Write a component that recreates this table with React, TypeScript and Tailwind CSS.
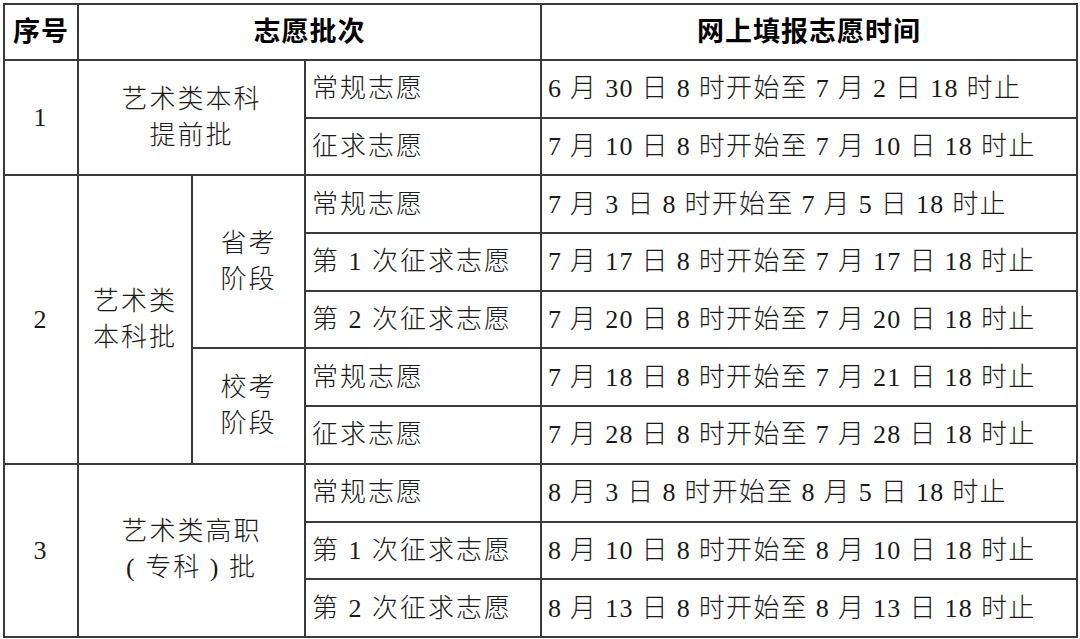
import React from 'react';

type Row = { kind: string; time: string };

const td = 'border-2 border-[#3a3a3a] p-0 overflow-hidden';
const cellText = 'pl-[6px] text-left whitespace-nowrap';

const rows: Row[] = [
    { kind: '常规志愿', time: '6 月 30 日 8 时开始至 7 月 2 日 18 时止' },
    { kind: '征求志愿', time: '7 月 10 日 8 时开始至 7 月 10 日 18 时止' },
    { kind: '常规志愿', time: '7 月 3 日 8 时开始至 7 月 5 日 18 时止' },
    { kind: '第 1 次征求志愿', time: '7 月 17 日 8 时开始至 7 月 17 日 18 时止' },
    { kind: '第 2 次征求志愿', time: '7 月 20 日 8 时开始至 7 月 20 日 18 时止' },
    { kind: '常规志愿', time: '7 月 18 日 8 时开始至 7 月 21 日 18 时止' },
    { kind: '征求志愿', time: '7 月 28 日 8 时开始至 7 月 28 日 18 时止' },
    { kind: '常规志愿', time: '8 月 3 日 8 时开始至 8 月 5 日 18 时止' },
    { kind: '第 1 次征求志愿', time: '8 月 10 日 8 时开始至 8 月 10 日 18 时止' },
    { kind: '第 2 次征求志愿', time: '8 月 13 日 8 时开始至 8 月 13 日 18 时止' },
];

// cells that start on a given row (seq number, batch, stage)
const lead = (i: number) => {
    switch (i) {
        case 0:
            return (
                <>
                    <td rowSpan={2} className={`${td} text-center`}>1</td>
                    <td rowSpan={2} colSpan={2} className={`${td} text-center leading-[36px]`}>
                        艺术类本科<br />提前批
                    </td>
                </>
            );
        case 2:
            return (
                <>
                    <td rowSpan={5} className={`${td} text-center`}>2</td>
                    <td rowSpan={5} className={`${td} text-center leading-[36px]`}>
                        艺术类<br />本科批
                    </td>
                    <td rowSpan={3} className={`${td} text-center leading-[36px]`}>
                        省考<br />阶段
                    </td>
                </>
            );
        case 5:
            return (
                <td rowSpan={2} className={`${td} text-center leading-[36px]`}>
                    校考<br />阶段
                </td>
            );
        case 7:
            return (
                <>
                    <td rowSpan={3} className={`${td} text-center`}>3</td>
                    <td rowSpan={3} colSpan={2} className={`${td} text-center leading-[36px]`}>
                        艺术类高职<br />( 专科 ) 批
                    </td>
                </>
            );
        default:
            return null;
    }
};

const App: React.FC = () => {
    return (
        <div className="w-[1080px] h-[639px] bg-white pt-[3px] pl-[3px] overflow-hidden">
            <table
                className="table-fixed border-collapse w-[1073px] text-[26px] tracking-[2px] text-[#1a1a1a] font-light"
                style={{ fontFamily: '"Liberation Serif", "Noto Sans CJK SC", serif' }}
            >
                <colgroup>
                    <col className="w-[74px]" />
                    <col className="w-[114px]" />
                    <col className="w-[113px]" />
                    <col className="w-[236px]" />
                    <col className="w-[536px]" />
                </colgroup>
                <thead>
                    <tr className="h-[56px] font-bold text-[27px] text-black">
                        <th className={`${td} text-center tracking-[1px]`}>序号</th>
                        <th colSpan={3} className={`${td} text-center tracking-[1px]`}>志愿批次</th>
                        <th className={`${td} text-center tracking-[1px]`}>网上填报志愿时间</th>
                    </tr>
                </thead>
                <tbody>
                    {rows.map((r, i) => (
                        <tr key={i} className="h-[57.7px]">
                            {lead(i)}
                            <td className={`${td} ${cellText}`}>{r.kind}</td>
                            <td className={`${td} ${cellText} pl-[4px] tracking-[1.3px]`}>{r.time}</td>
                        </tr>
                    ))}
                </tbody>
            </table>
        </div>
    );
};

export default App;
